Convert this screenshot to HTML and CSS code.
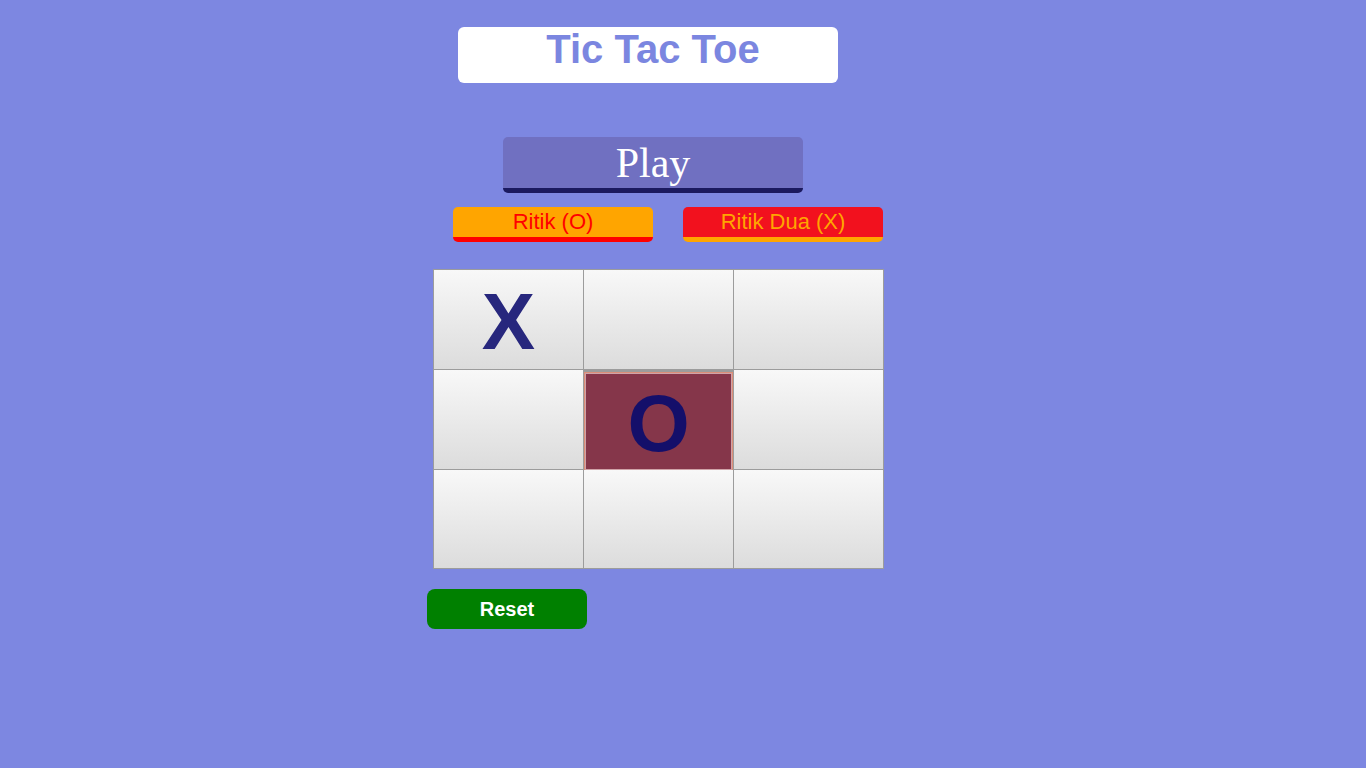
FILE: index.html
```html
<!DOCTYPE html>
<html lang="en">
<head>
<meta charset="utf-8">
<title>Tic Tac Toe</title>
<link rel="stylesheet" href="styles.css">
</head>
<body>
<main class="game">
  <h1 class="title">Tic Tac Toe</h1>
  <button class="play">Play</button>
  <div class="players">
    <div class="player player-o">Ritik (O)</div>
    <div class="player player-x">Ritik Dua (X)</div>
  </div>
  <div class="board">
    <div class="cell mark-x">X</div>
    <div class="cell"></div>
    <div class="cell"></div>
    <div class="cell"></div>
    <div class="cell cell-win mark-o">O</div>
    <div class="cell"></div>
    <div class="cell"></div>
    <div class="cell"></div>
    <div class="cell"></div>
  </div>
  <button class="reset">Reset</button>
</main>
</body>
</html>
```

FILE: styles.css
```css
html, body {
  margin: 0;
  padding: 0;
}
body {
  background: #7d87e1;
  font-family: "Liberation Sans", Arial, sans-serif;
  min-height: 768px;
}
.game {
  display: flex;
  flex-direction: column;
  align-items: flex-start;
  padding: 27px 0 0 427px;
}
.title {
  box-sizing: border-box;
  width: 380px;
  height: 56px;
  margin: 0 0 0 31px;
  padding: 0 0 0 10px;
  background: #ffffff;
  border-radius: 6px;
  color: #7b86e0;
  font-size: 40px;
  font-weight: bold;
  line-height: 45px;
  text-align: center;
}
.play {
  box-sizing: content-box;
  width: 300px;
  height: 51px;
  margin: 54px 0 0 76px;
  padding: 0;
  border: none;
  border-bottom: 5px solid #1b1a5f;
  border-radius: 5px;
  background: #7070c1;
  color: #ffffff;
  font-family: "Liberation Serif", "Times New Roman", serif;
  font-size: 42px;
  line-height: 52px;
  text-align: center;
}
.players {
  display: flex;
  gap: 30px;
  margin: 14px 0 0 26px;
}
.player {
  width: 200px;
  height: 30px;
  border-radius: 5px;
  font-size: 22px;
  line-height: 30px;
  text-align: center;
}
.player-o {
  background: #ffa500;
  color: #ff0000;
  border-bottom: 5px solid #ff0000;
}
.player-x {
  background: #f2111e;
  color: #ffa500;
  border-bottom: 5px solid #ffa500;
}
.board {
  display: grid;
  grid-template-columns: repeat(3, 149px);
  grid-template-rows: 99px 99px 98px;
  gap: 1px;
  padding: 1px;
  margin: 27px 0 0 6px;
  background: #9c9c9c;
}
.cell {
  display: flex;
  align-items: center;
  justify-content: center;
  padding-top: 4px;
  box-sizing: border-box;
  background: linear-gradient(#f8f8f8, #dcdcdc);
  font-size: 80px;
  font-weight: bold;
  line-height: 1;
}
.mark-x {
  color: #27277d;
}
.mark-o {
  color: #140f6a;
}
.cell-win {
  background: #85364a;
  border: 1px solid #db8e78;
  box-shadow: inset 0 0 0 1px #cfa3a8;
  margin-top: 2px;
  margin-bottom: -2px;
}
.reset {
  width: 160px;
  height: 40px;
  margin: 20px 0 0 0;
  padding: 0;
  border: none;
  border-radius: 8px;
  background: #008000;
  color: #ffffff;
  font-family: "Liberation Sans", Arial, sans-serif;
  font-size: 20px;
  font-weight: bold;
  line-height: 40px;
}
```
